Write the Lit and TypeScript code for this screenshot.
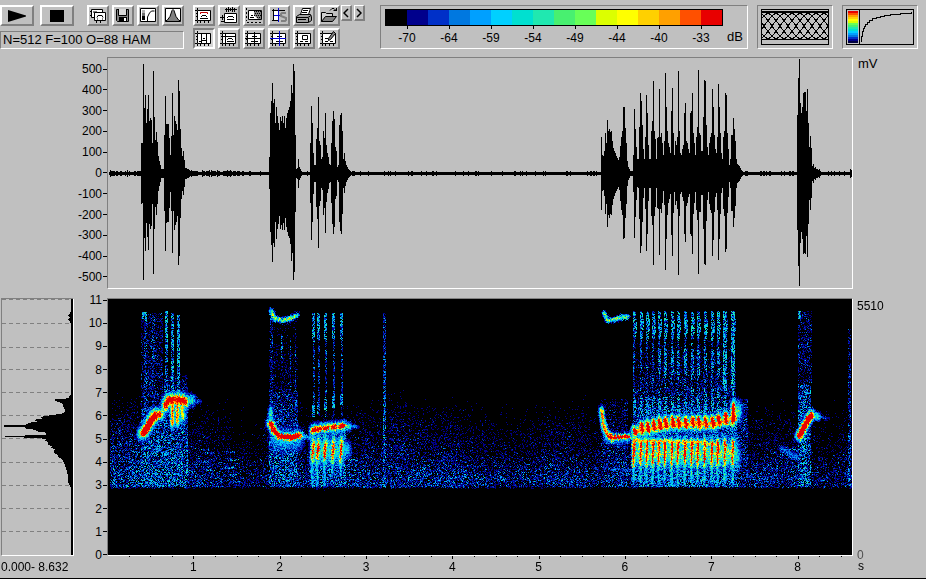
import { LitElement, html, svg, css, TemplateResult } from "lit";
import { customElement, query } from "lit/decorators.js";

/* ---------- data ---------- */

const DURATION = 8.632;
const AMPLITUDES = [500, 400, 300, 200, 100, 0, -100, -200, -300, -400, -500];
const FREQS = [11, 10, 9, 8, 7, 6, 5, 4, 3, 2, 1, 0];
const SECONDS = [1, 2, 3, 4, 5, 6, 7, 8];
const LEVELS = ["-70", "-64", "-59", "-54", "-49", "-44", "-40", "-33"];
const PALETTE = [
  "#000000", "#00008c", "#0030c8", "#0078e0", "#00a0ff", "#00d0ff", "#00e0d0", "#20e8b0",
  "#48f070", "#68ff58", "#dcff00", "#ffff00", "#ffd000", "#ffa000", "#ff5000", "#e80000",
];

/* Envelope runs: first column of the burst, then one amplitude per column. */
const BURSTS: [number, number[]][] = [
  [33, [30, 30, 109, 65, 78, 50, 64, 78, 52, 55, 53, 30, 102, 56, 33, 41, 31, 17, 12, 8, 4, 4, 4, 38, 77, 49, 49, 49, 35, 18, 37, 80, 38, 57, 52, 49, 43, 93, 82, 44, 25, 17, 22, 13, 5, 5, 4, 4, 3, 2]],
  [161, [16, 60, 72, 90, 70, 74, 50, 66, 57, 50, 43, 56, 52, 57, 50, 57, 45, 55, 60, 63, 66, 72, 88, 80, 109, 102, 38, 4, 5, 14, 6, 4]],
  [202, [30, 67, 50, 20, 8, 8, 34, 45, 76, 32, 28, 14, 16, 42, 35, 60, 28, 20, 16, 9, 8, 30, 52, 62, 54, 26, 22, 6, 8, 48, 58, 60, 42, 14, 20, 12, 8, 6, 4, 3, 2]],
  [493, [36, 18, 17, 22, 40, 30, 53, 42, 44, 41, 42, 32, 25, 22, 20, 17, 15, 13, 16, 27, 36, 42, 66, 66, 45, 30, 12, 6, 4, 2, 2, 2, 18, 64, 44, 26, 14, 14, 46, 80, 72, 48, 24, 14, 36, 78, 60, 28, 14, 14, 42, 52, 92, 42, 34, 14, 35, 36, 84, 36, 40, 30, 18, 32, 100, 66, 42, 30, 26, 20, 62, 85, 40, 18, 32, 28, 36, 102, 42, 20, 18, 24, 28, 60, 70, 32, 30, 24, 20, 60, 62, 80, 40, 30, 18, 36, 46, 103, 40, 38, 22, 22, 56, 93, 92, 48, 26, 18, 30, 36, 40, 84, 66, 38, 24, 20, 36, 89, 66, 40, 20, 14, 36, 42, 80, 78, 40, 24, 8, 14, 38, 38, 55, 44, 32, 14, 9, 8, 7, 5, 3, 2]],
  [689, [58, 95, 114, 70, 60, 66, 80, 81, 81, 62, 84, 50, 26, 37, 25, 7, 9, 5, 6, 4, 4, 3, 4, 2]],
  [742, [4, 3]],
];

const PULSES = [526, 533, 539, 545, 551, 557, 564, 570, 577, 584, 590, 597, 604, 610, 617, 625];

function makeRandom(seed: number): () => number {
  let s = seed;
  return () => {
    s = (s + 0x6d2b79f5) | 0;
    let t = Math.imul(s ^ (s >>> 15), 1 | s);
    t = (t + Math.imul(t ^ (t >>> 7), 61 | t)) ^ t;
    return ((t ^ (t >>> 14)) >>> 0) / 4294967296;
  };
}

/* ---------- waveform ---------- */

@customElement("wave-form")
class WaveForm extends LitElement {
  static styles = css`
    :host { display: block; contain: size; min-height: 0; }
    .trace { display: block; width: 100%; height: 100%; }
  `;

  private path(): string {
    const rand = makeRandom(7);
    const amp = new Array(744).fill(1);
    for (let x = 0; x < 744; x++) {
      const r = rand();
      const busy = x < 34 || (x > 80 && x < 140);
      amp[x] = r > 0.8 || (busy && r > 0.4) ? 2 : 1;
      if (busy && r > 0.93) amp[x] = 3;
    }
    for (const [start, run] of BURSTS) run.forEach((a, i) => (amp[start + i] = a));
    return amp
      .map((a, x) => {
        const low = a > 10 ? Math.round(a * (0.96 + rand() * 0.04)) : a;
        return x < 1 ? "" : `M${x} ${115 - a}h1V${116 + low}h-1z`;
      })
      .join("");
  }

  render() {
    return html`<svg class="trace" viewBox="0 0 744 230" preserveAspectRatio="none"
      shape-rendering="crispEdges" role="img" aria-label="Waveform"><path d=${this.path()} /></svg>`;
  }
}

/* ---------- spectrogram ---------- */

const W = 744;
const H = 256;

@customElement("spectro-gram")
class SpectroGram extends LitElement {
  static styles = css`
    :host { display: block; contain: size; min-height: 0; background: #000; }
    .map { display: block; width: 100%; height: 100%; image-rendering: pixelated; }
  `;

  @query("canvas") private canvas!: HTMLCanvasElement;

  private tone = new Float32Array(W * H);
  private haze = new Float32Array(W * H);

  /* Lays a soft ridge of the given peak along a polyline. */
  private ridge(points: number[][], peak: number, sx: number, sy: number) {
    for (let i = 0; i < points.length - 1; i++) {
      const [x0, y0] = points[i];
      const [x1, y1] = points[i + 1];
      const n = Math.max(1, Math.ceil(Math.hypot(x1 - x0, y1 - y0)));
      for (let k = 0; k <= n; k++) {
        const cx = x0 + ((x1 - x0) * k) / n;
        const cy = y0 + ((y1 - y0) * k) / n;
        for (let y = Math.floor(cy - sy * 3); y <= cy + sy * 3; y++) {
          for (let x = Math.floor(cx - sx * 3); x <= cx + sx * 3; x++) {
            if (x < 0 || y < 0 || x >= W || y >= H) continue;
            const d = ((x - cx) / sx) ** 2 + ((y - cy) / sy) ** 2;
            const v = peak * Math.exp(-d / 2);
            if (v > this.tone[y * W + x]) this.tone[y * W + x] = v;
          }
        }
      }
    }
  }

  /* Adds speckle of a mean level that runs from top to bottom of a box. */
  private cloud(x0: number, x1: number, y0: number, y1: number, top: number, bottom = top) {
    for (let y = y0; y < y1; y++) {
      const m = top + ((bottom - top) * (y - y0)) / (y1 - y0);
      for (let x = x0; x < x1; x++) {
        if (x < 0 || x >= W) continue;
        if (m > this.haze[y * W + x]) this.haze[y * W + x] = m;
      }
    }
  }

  private compose() {
    const r = makeRandom(21);
    const floor = [[84, 0], [96, 0.18], [112, 0.38], [130, 0.55], [152, 0.78], [165, 1.15], [180, 1.6], [187, 1.5], [190, 0]];
    for (let x = 3; x < W; x++) {
      let g = 1 + 0.14 * Math.sin(x / 13) + 0.1 * Math.sin(x / 31);
      if (x < 80) g = 1.5;
      if (x > 100 && x < 155) g *= 0.9;
      if (x > 270 && x < 500) g = 1 + 0.3 * Math.exp(-(((x - 300) / 40) ** 2)) + 0.12 * Math.sin(x / 17);
      for (let i = 0; i < floor.length - 1; i++) {
        const [ya, a] = floor[i];
        const [yb, b] = floor[i + 1];
        for (let y = ya; y < yb; y++) this.haze[y * W + x] = g * (a + ((b - a) * (y - ya)) / (yb - ya));
      }
    }
    // opening rise
    this.cloud(2, 33, 120, 188, 0.8, 2.4);
    this.cloud(33, 55, 14, 110, 0.9, 1.3);
    this.cloud(33, 80, 110, 188, 1.8, 3.2);
    this.cloud(34, 39, 13, 20, 5);
    this.cloud(36, 39, 14, 112, 2.1);
    this.cloud(44, 47, 14, 112, 1.7);
    this.cloud(56, 80, 75, 98, 0.9, 2);
    this.cloud(57, 60, 12, 50, 4.8, 4);
    this.cloud(57, 60, 50, 98, 2.6);
    this.cloud(63, 66, 14, 98, 3.6);
    this.cloud(69, 72, 16, 98, 4.2);
    this.ridge([[34, 134], [38, 129], [42, 121], [46, 115], [51, 115]], 17, 3.2, 4);
    this.ridge([[36, 132], [41, 124], [46, 117]], 22, 2.8, 4);
    this.ridge([[53, 114], [57, 108], [58, 100]], 10, 2.4, 4);
    this.ridge([[57, 106], [59, 101], [70, 100], [77, 102]], 18, 2.6, 4.5);
    this.ridge([[64, 104], [64, 124]], 15, 1.6, 4);
    this.ridge([[69, 104], [69, 122]], 15, 1.6, 4);
    this.ridge([[74, 104], [74, 116]], 13, 2.4, 5);
    this.ridge([[77, 101], [83, 101]], 9, 3, 4);
    this.ridge([[80, 101], [89, 102]], 4, 3, 2);
    for (const [x, y] of [[92, 150], [97, 153], [92, 162], [98, 170], [118, 152], [122, 160], [117, 168], [121, 175], [125, 182]])
      this.cloud(x, x + 9, y, y + 2, 3);

    // second call
    this.cloud(161, 190, 20, 90, 0.4, 0.8);
    this.cloud(161, 190, 90, 188, 1.3, 3);
    this.cloud(162, 165, 14, 120, 1.6);
    this.cloud(173, 175, 36, 60, 2.6);
    this.cloud(173, 175, 60, 110, 1.1);
    this.cloud(182, 183, 40, 160, 1.8);
    this.cloud(187, 188, 30, 160, 1.8);
    this.ridge([[163, 12], [166, 19], [174, 21], [182, 19], [188, 16]], 12, 1.5, 1.6);
    this.ridge([[162, 124], [166, 132], [171, 137], [182, 138], [191, 136]], 19, 2.4, 3);
    this.ridge([[162, 114], [163, 124]], 9, 1.8, 5);
    this.ridge([[168, 140], [188, 140]], 6, 5, 8);
    this.ridge([[191, 136], [200, 138]], 8, 1.6, 1.6);

    // short pulse series
    this.cloud(202, 238, 125, 188, 2.6, 2.6);
    [205, 210, 217, 225, 233].forEach((x, i) => {
      this.cloud(x - 1, x + 2, 14, 40, 4.2);
      this.cloud(x, x + 2, 40, 118, 1.8);
      this.cloud(x - 1, x + 2, 106 - i * 3, 118 - i * 3, 4.2);
      this.ridge([[x - 1, 131 - i], [x + 2, 130 - i]], 19, 2.2, 2.8);
      this.ridge([[x, 144], [x - 1, 158]], 13.5, 1.7, 6);
      this.ridge([[x, 146], [x - 1, 156]], 18, 1.1, 4);
      this.ridge([[x - 1, 158], [x - 1, i < 3 ? 182 : 172]], 7.5, 1, 4);
    });
    this.ridge([[204, 150], [234, 152]], 8, 2, 9);
    this.ridge([[204, 130], [236, 127]], 9, 2, 4);
    this.ridge([[235, 127], [240, 127]], 9, 2.4, 3);
    this.ridge([[240, 127], [247, 127]], 5, 2, 1.4);
    this.ridge([[235, 150], [239, 150]], 7, 2.6, 6);
    for (let y = 160; y < 186; y += 5) this.cloud(240, 250, y, y + 2, 2.6);
    this.cloud(275, 278, 14, 188, 1.7, 2.8);
    this.cloud(279, 298, 90, 188, 0.3, 1.7);

    // third call
    this.cloud(493, 520, 100, 188, 0.7, 1.9);
    this.ridge([[496, 14], [499, 21], [506, 20], [519, 17]], 12, 1.3, 1.5);
    this.ridge([[493, 112], [495, 126], [499, 136], [504, 139]], 15, 1.7, 3.4);
    this.ridge([[499, 136], [506, 138], [520, 137]], 19, 1.8, 2.1);
    this.ridge([[500, 139], [518, 139]], 6, 3, 4);
    this.ridge([[520, 137], [527, 138]], 9, 1.6, 1.6);
    this.ridge([[503, 170], [526, 170]], 4.4, 1, 0.8);

    // long trill
    this.cloud(526, 628, 40, 110, 0.4, 1.5);
    this.cloud(526, 630, 108, 188, 2.6, 3.2);
    PULSES.forEach((x, i) => {
      const up = i < 6 ? 131 - i * 1.3 : i < 13 ? 124 : 124 - (i - 12) * 2;
      this.cloud(x - 1, x + 1, 12, 100, 2, 1.8);
      this.cloud(x - 1, x + 2, 13, 40, 4.2, 3.6);
      this.cloud(x + 1, x + 3, 20, 34, 4);
      if (i > 3) this.cloud(x - 1, x + 2, 50, 76, 3.6);
      if (i > 8) this.cloud(x - 1, x + 2, 88, 106, 3);
      if (i > 13) this.cloud(x - 2, x + 2, 12, 90, 4.8, 4.2);
      this.cloud(x - 1, x + 2, 98, 122, 4);
      this.ridge([[x, up - (i ? 4 : 0)], [x + 1, up + 2]], 19, 2.1, 3.4);
      this.ridge([[x - 1, 144], [x - 1, 163]], 15, 1.3, 5);
      this.ridge([[x, 145], [x - 1, 160]], 18.5, 0.9, 4);
      this.ridge([[x - 1, 162], [x - 1, 180]], 8, 1, 4);
    });
    this.ridge([[526, 132], [545, 129], [565, 125], [605, 125], [624, 119]], 13.5, 2.4, 3.8);
    this.ridge([[526, 141], [560, 142], [590, 143], [610, 146]], 13.5, 2, 2.2);
    this.ridge([[526, 153], [624, 155]], 10, 2, 9);
    this.ridge([[624, 122], [625, 106]], 17, 2, 4);
    this.ridge([[627, 114], [630, 112]], 9, 2.8, 7);
    this.ridge([[626, 150], [628, 156]], 8, 2.8, 8);
    this.cloud(628, 640, 100, 188, 1.4, 1.8);

    // closing rise
    this.cloud(672, 692, 148, 160, 1.6);
    this.ridge([[673, 149], [688, 158]], 4.4, 2, 2);
    this.cloud(690, 704, 12, 86, 1.1);
    this.cloud(690, 703, 86, 188, 2.4, 3);
    this.cloud(690, 693, 12, 20, 5);
    this.ridge([[691, 136], [696, 127], [700, 119], [703, 116]], 22, 2.3, 3.4);
    this.ridge([[703, 116], [709, 117]], 9, 2.2, 2.8);
    this.ridge([[709, 117], [718, 119]], 4, 2, 1);
    this.cloud(740, 743, 30, 188, 0.9, 2.8);

    const rgb = PALETTE.map((c) => [1, 3, 5].map((k) => parseInt(c.slice(k, k + 2), 16)));
    const image = new ImageData(W, H);
    for (let i = 0; i < W * H; i++) {
      const speck = this.haze[i] * Math.pow(-Math.log(1 - r() * 0.9999), 0.85);
      // sampling a near neighbour roughens the edges of each ridge
      const from = i + Math.round((r() - 0.5) * 2) + W * Math.round((r() - 0.5) * 4);
      const t = 0.45 * this.tone[i] + 0.55 * (this.tone[from] || 0);
      const solid = t > 12 ? t * (0.9 + r() * 0.2) : t * (0.45 + r() * 0.75);
      const v = Math.min(15, Math.floor(Math.max(Math.min(speck, 7), solid)));
      const [cr, cg, cb] = rgb[v];
      image.data.set([cr, cg, cb, 255], i * 4);
    }
    return image;
  }

  firstUpdated() {
    this.canvas.getContext("2d")!.putImageData(this.compose(), 0, 0);
  }

  render() {
    return html`<canvas class="map" width=${W} height=${H} role="img" aria-label="Spectrogram"></canvas>`;
  }
}

/* ---------- icons, drawn on an 18 x 17 grid ---------- */

const frame = svg`<path d="M2.500 3.500h13v10h-13z" fill="#fff" stroke="#000"/><path d="M2.500 1v2M0 3.500h2M1 6.500h1M1 9.500h1M0 13.500h2M2.500 14v2M5.500 14v2M9.500 14v2M13.500 14v2" fill="none" stroke="#000"/>`;

const ICONS: Record<string, TemplateResult> = {
  windows: svg`<path d="M2.500 2.500h11v8h-11z" fill="#fff" stroke="#000"/><path d="M1 4.500h2M1 8.500h2M4 5h4M5.500 5.500h11v8h-11z" fill="#fff" stroke="#000"/><path d="M8 10.500l1-2h4l1 2M8 12h1M13 12h1M7.500 14v2M11.500 14v2" fill="none" stroke="#000"/>`,
  save: svg`<path d="M2.500 2.500h12v12h-11l-1-1z" fill="#808080" stroke="#000"/><path d="M5 2h7v6H5z" fill="#d8d8d8"/><path d="M4.500 2v6.500h8V2" fill="none" stroke="#000"/><path d="M5 10h8v5H5z"/><path d="M10 11h2v3h-2z" fill="#fff"/>`,
  transfer: svg`<path d="M1.500 1.500h15v13h-15z" fill="#fff" stroke="#000"/><path d="M3 3h3v3H3z" fill="#b0b0b0"/><path d="M3 6h3v3H3z" fill="#707070"/><path d="M3 9h3v4H3z"/><path d="M8.500 14V10l2-4 2-2h3" fill="none" stroke="#000"/>`,
  bell: svg`<path d="M1.500 1.500h15v13h-15z" fill="#fff" stroke="#000"/><path d="M2 13.500h1l3-4 2-6 1-1 1 1 2 6 3 4h1v1H2z" fill="#808080" stroke="#000"/>`,
  spectrum: svg`${frame}<path d="M5.500 7v-1.500h7V7" fill="none" stroke="#c00000"/><path d="M7 8.500h4M6 9.500h1M11 9.500h1M5 11.500h8" fill="none" stroke="#000"/>`,
  wave: svg`<path d="M4.500 6.500h12v9h-12z" fill="#fff" stroke="#000"/><path d="M5 2.500h12M6.500 1v4M8.500 0v5M10.500 1v3M12.500 0v5M14.500 1v4M0 10.500h4M1 14.500h3M2.500 8v5M8 9.500h5M7 10.500h1M13 10.500h1M7 12.500h7" fill="none" stroke="#000"/>`,
  region: svg`<path d="M3.500 3.500h13v9h-13z" fill="#fff" stroke="#000"/><path d="M9 4h7v8h-3l-4-4z" fill="#808080"/><path d="M9 4.500h7M10 6.500h6M9 8.500h7M12 10.500h4" stroke="#000" stroke-dasharray="1 1"/><path d="M1.500 1v13M2 15.500h15" fill="none" stroke="#000" stroke-dasharray="2 2"/><path d="M5 10.500h4M6 8.500h2" stroke="#000"/>`,
  splitS: svg`<path d="M3.500 2v12M2 3.500h13M2 13.500h7M5 7.500h3" fill="none" stroke="#000"/><path d="M4 4h5v9H4z" fill="#fff"/><path d="M8.500 1v14M4 8.500h7" stroke="#0000d0"/><path d="M16 6h-4l-1 1v2l5 2v2l-1 1h-4" fill="none" stroke="#808080" stroke-width="2"/>`,
  print: svg`<path d="M5.500 7.500l2-6h8l-2 6z" fill="#fff" stroke="#000"/><path d="M8 3.500h5M7 5.500h5" stroke="#000"/><path d="M1.500 9.500l3-2h11l1 2v4l-3 2h-12z" fill="#a0a0a0" stroke="#000"/><path d="M2 10.500h11l3-2M3 12.500h8M13.500 11v4" fill="none" stroke="#000"/>`,
  open: svg`<path d="M1.500 14.500v-9h4l1 1h6v3" fill="#d0d0d0" stroke="#000"/><path d="M1.500 14.500l4-5h11l-4 5z" fill="#808080" stroke="#000"/><path d="M10 3.500l2-2h2l2 2M16.500 1v3M13.500 3.500h3" fill="none" stroke="#000"/>`,
  vertical: svg`${frame}<path d="M6.500 3v11M11.500 3v11M8 8.500h2M7 10.500h4M4 11.500h2" stroke="#000"/>`,
  top: svg`${frame}<path d="M3 6.500h13M5.500 3v11M8 8.500h4M7 9.500h1M12 9.500h1M7 11.500h7" stroke="#000"/>`,
  cross: svg`${frame}<path d="M0 8.500h16M9.500 2v13M7 6.500h5M6 11.500h7" stroke="#000"/>`,
  crossBlue: svg`${frame}<path d="M7 6.500h5M6 11.500h7" stroke="#000"/><path d="M0 8.500h16M9.500 1v15" stroke="#0000d0"/>`,
  box: svg`${frame}<path d="M7.500 5.500h5v4h-5z" fill="#fff" stroke="#000"/><path d="M5 11.500h3M10 11.500h3" stroke="#000"/>`,
  edit: svg`${frame}<path d="M5 11.500h3M10 11.500h3M5 8.500h3" stroke="#000"/><path d="M8.500 8.500l5-7 2 2-5 6-2 1z" fill="#808080" stroke="#000"/>`,
};

const tool = (name: string, label: string, pressed = false) => html`<button
  class="btn ${pressed ? "down" : ""}" aria-label=${label} title=${label}>
  <svg width="18" height="17" viewBox="0 0 18 17">${ICONS[name]}</svg></button>`;

/* ---------- application ---------- */

@customElement("app-root")
class AppRoot extends LitElement {
  static styles = css`
    :host {
      display: flex; flex-direction: column; box-sizing: border-box; min-height: 100vh;
      background: #c0c0c0; color: #000; border-bottom: 1px solid #000;
      font: 12px/12px "Liberation Sans", Arial, sans-serif;
    }
    svg { display: block; flex: none; }
    .bar { display: flex; align-items: flex-start; padding: 5px 8px 8px 0; gap: 9px; }
    .left { display: flex; flex-direction: column; gap: 5px; width: 184px; flex: none; }
    .row { display: flex; }
    .transport { gap: 6px; }
    .files { gap: 3px; margin-left: auto; }
    .tools { display: grid; grid-template-columns: repeat(6, 22px); gap: 2px 3px; flex: none; }
    .panes { gap: 2px; margin-right: 6px; margin-left: -8px; }
    .btn {
      box-sizing: border-box; width: 22px; height: 21px; padding: 0; background: #c0c0c0;
      border: 2px solid; border-color: #fff #808080 #808080 #fff; color: #000;
      display: flex; align-items: center; justify-content: center; font: inherit; overflow: hidden;
    }
    .down { border-color: #808080 #fff #fff #808080; background: #d4d4d4; }
    .wide { width: 34px; }
    .slim { width: 11px; height: 16px; border-width: 1px 2px 2px 1px; }
    .well { box-sizing: border-box; border: 1px solid; border-color: #808080 #fff #fff #808080; }
    .status { height: 18px; padding-left: 2px; font-size: 13px; line-height: 16px; white-space: nowrap; }
    .meter { flex: 1; height: 44px; display: flex; padding: 3px 0 0 4px; min-width: 200px; }
    .scale { flex: 1; }
    .swatches { display: flex; height: 15px; border: 1px solid #000; }
    .swatch { flex: 1; }
    .marks { display: flex; padding: 0 1px; }
    .mark { flex: 1; display: flex; flex-direction: column; align-items: center; gap: 2px; line-height: 14px; }
    .mark::before { content: ""; width: 1px; height: 3px; background: #000; }
    .unit { font-size: 13px; line-height: 14px; }
    .db { width: 24px; text-align: center; align-self: flex-end; padding-bottom: 4px; }
    .mini { width: 76px; height: 44px; padding: 3px; flex: none; }
    .plots {
      flex: 1; display: grid; grid-template-columns: 74px 33px 1fr 73px;
      grid-template-rows: minmax(150px, 9fr) 9px minmax(165px, 10fr) 22px;
    }
    .wave { grid-area: 1 / 3; }
    .gram { grid-area: 3 / 3; }
    .wave, .gram { display: grid; }
    .profile { grid-area: 3 / 1; margin-left: 1px; contain: size; }
    .profile svg { width: 100%; height: 100%; }
    .axis { display: flex; flex-direction: column; justify-content: space-between; align-items: flex-end; }
    .amp { grid-area: 1 / 1 / 2 / 3; padding: 6px 0; }
    .freq { grid-area: 3 / 2; margin: -4px 0 -5px; }
    .label { display: flex; align-items: center; gap: 1px; }
    .label::after { content: ""; width: 4px; height: 1px; background: #000; }
    .mv { grid-area: 1 / 4; padding-left: 5px; }
    .range { grid-area: 3 / 4; display: flex; flex-direction: column; justify-content: space-between;
      padding-left: 4px; line-height: 14px; margin-bottom: -6px; padding-top: 1px; }
    .zero { color: #505050; }
    .span { grid-area: 4 / 1 / 5 / 3; padding: 5px 0 0 1px; }
    .time { grid-area: 4 / 3; min-width: 0; }
    .ticks { width: 100%; height: 3px; }
    .times { display: flex; padding-top: 2px; }
    .half, .sec { flex: none; text-align: center; }
    .sec-unit { grid-area: 4 / 4; padding: 4px 0 0 5px; }
  `;

  private lattice() {
    const curves: string[] = [];
    for (let s = -61; s < 68; s += 8) {
      let d = "";
      for (let x = Math.max(1, s); x <= Math.min(67, s + 64); x++) {
        const y = 31 - 28 * (0.5 - 0.5 * Math.cos((2 * Math.PI * (x - s)) / 64));
        d += `${d ? "L" : "M"}${x} ${y.toFixed(1)}`;
      }
      curves.push(d);
    }
    return html`<svg width="68" height="36" viewBox="0 0 68 36" shape-rendering="crispEdges"
      role="img" aria-label="Window overlap" fill="none" stroke="#000">
      <path d="M0.500 0.500h67v35h-67zM1 2.500h66" /><path d=${curves.join("")} /></svg>`;
  }

  private transferCurve() {
    return html`<svg width="68" height="36" viewBox="0 0 68 36" shape-rendering="crispEdges"
      role="img" aria-label="Colour transfer curve">
      ${PALETTE.slice(1).map((c, i) => svg`<rect x="2" y=${30 - i * 2} width="10" height="2" fill=${c} />`)}
      <rect x="2" y="32" width="10" height="2" fill="#000040" />
      <path d="M0.500 0.500h67v35h-67zM13.500 1v34M15.500 33v-6h1v-5h1v-3h1v-2h1v-2h2v-2h2v-2h3v-2h4v-1h4v-1h4v-1h6v-1h10v-1h11v-1"
        fill="none" stroke="#000" /></svg>`;
  }

  private profile() {
    const grid = [30, 100, 172, 240, 309, 378, 448, 520, 589, 658, 727];
    return html`<svg viewBox="5 27 213 770" preserveAspectRatio="none" role="img" aria-label="Mean spectrum">
      ${grid.map((y) => svg`<path d="M5 ${y}H214" stroke="#808080" stroke-dasharray="4 3" vector-effect="non-scaling-stroke" shape-rendering="crispEdges" />`)}
      <path shape-rendering="crispEdges" d="M217 27H213V60L210 68 204 76 208 82 204 88 210 98 213 100V315L205 320 206 325 195 327 163 329V333L180 338 186 343 190 352 195 362 190 370 178 373 150 377 130 380 118 382 128 386 108 389 100 391 112 395 95 398 80 403 72 406 12 407V411L72 412 78 417 110 421 106 425 135 428 132 431 148 434 110 437 15 439V443L90 444 140 448 134 452 145 460 142 464 155 470 152 474 163 480 160 490 170 494 175 502 185 510 193 525 198 540 203 560 202 575 208 588 213 595V797H217z" />
    </svg>`;
  }

  render() {
    const unit = 100 / (DURATION + 0.008);
    const quarters = Array.from({ length: 34 }, (_, i) => (i + 1) / 4);
    return html`
      <header class="bar">
        <div class="left">
          <div class="row">
            <div class="row transport">
              <button class="btn wide" aria-label="Play" title="Play"><svg width="18" height="12" viewBox="0 0 18 12"><path d="M0 0l18 5.500v1L0 12z" /></svg></button>
              <button class="btn wide" aria-label="Stop" title="Stop"><svg width="14" height="12" viewBox="0 0 14 12"><path d="M0 0h14v12H0z" /></svg></button>
            </div>
            <div class="row files">
              ${tool("windows", "Copy window")}${tool("save", "Save")}${tool("transfer", "Transfer curve")}${tool("bell", "Window function")}
            </div>
          </div>
          <div class="well status">N=512 F=100 O=88 HAM</div>
        </div>
        <div class="tools">
          ${tool("spectrum", "Spectrum")}${tool("wave", "Waveform")}${tool("region", "Region")}${tool("splitS", "Split")}${tool("print", "Print")}${tool("open", "Open")}
          ${tool("vertical", "Vertical cursors", true)}${tool("top", "Corner cursor")}${tool("cross", "Cross cursor")}${tool("crossBlue", "Harmonic cursor")}${tool("box", "Box cursor")}${tool("edit", "Edit")}
        </div>
        <div class="row panes">
          <button class="btn slim" aria-label="Previous"><svg width="6" height="10" viewBox="0 0 6 10"><path d="M5 1L1 5l4 4" fill="none" stroke="#000" stroke-width="1.500" /></svg></button>
          <button class="btn slim" aria-label="Next"><svg width="6" height="10" viewBox="0 0 6 10"><path d="M1 1l4 4-4 4" fill="none" stroke="#000" stroke-width="1.500" /></svg></button>
        </div>
        <div class="well meter">
          <div class="scale">
            <div class="swatches">${PALETTE.map((c) => html`<div class="swatch" style="background:${c}"></div>`)}</div>
            <div class="marks">${LEVELS.map((l) => html`<div class="mark">${l}</div>`)}</div>
          </div>
          <div class="unit db">dB</div>
        </div>
        <div class="well mini">${this.lattice()}</div>
        <div class="well mini">${this.transferCurve()}</div>
      </header>
      <main class="plots">
        <div class="axis amp">${AMPLITUDES.map((v) => html`<div class="label">${v}</div>`)}</div>
        <div class="well wave"><wave-form></wave-form></div>
        <div class="unit mv">mV</div>
        <div class="well profile">${this.profile()}</div>
        <div class="axis freq">${FREQS.map((v) => html`<div class="label">${v}</div>`)}</div>
        <div class="well gram"><spectro-gram></spectro-gram></div>
        <div class="range"><span>5510</span><span class="zero">0</span></div>
        <div class="span">0.000- 8.632</div>
        <div class="time">
          <svg class="ticks" shape-rendering="crispEdges" aria-hidden="true">
            ${quarters.map((t) => svg`<rect x="${t * unit}%" y="0" width="1" height=${t % 1 ? 1 : 3} />`)}
          </svg>
          <div class="times">
            <div class="half" style="width:${unit / 2}%"></div>
            ${SECONDS.map((s) => html`<div class="sec" style="width:${unit}%">${s}</div>`)}
          </div>
        </div>
        <div class="sec-unit">s</div>
      </main>
    `;
  }
}
